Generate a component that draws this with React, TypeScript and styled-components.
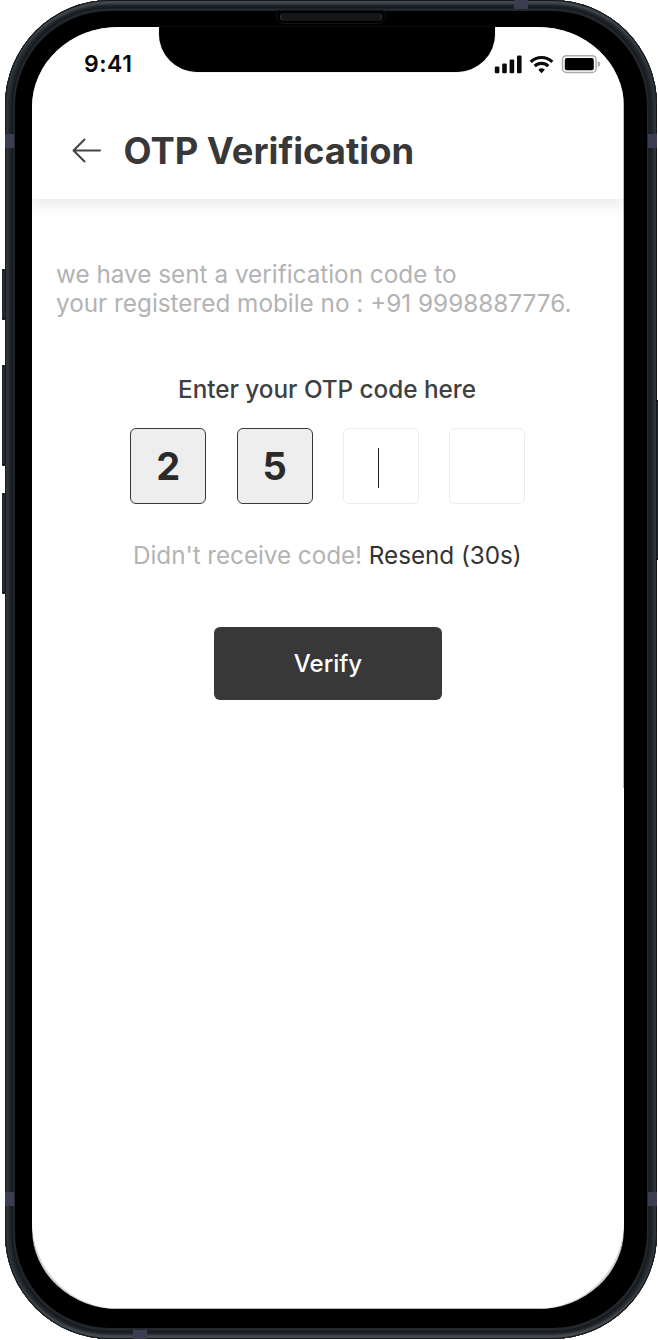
import React from "react";
import styled, { createGlobalStyle, css } from "styled-components";

const GlobalStyle = createGlobalStyle`
  *, *::before, *::after { box-sizing: border-box; }
  html, body { margin: 0; padding: 0; background: #fff; }
  body { font-family: Inter, "Liberation Sans", sans-serif; overflow: hidden; }
`;

const Stage = styled.div`
  position: relative;
  width: 658px;
  height: 1340px;
  padding: 0 1px 1.5px 5px;
  overflow: hidden;
`;

const Casing = styled.div`
  position: relative;
  width: 100%;
  height: 100%;
  padding: 11px 10px;
  border-radius: 105px;
  background: #22272d;
  box-shadow:
    inset 0 0 0 1px #14181c,
    inset 0 5px 2px -1px #424a4e,
    inset 0 -5px 2px -1px #454b4e,
    inset 0 0 2px 3px #30363d,
    inset 0 0 3px 6px #262c32,
    inset 0 0 1px 8.5px #15191d,
    inset 0 0 0 9.5px #2b2e31;
`;

const Bezel = styled.div`
  position: relative;
  height: 100%;
  padding: 10px 23px 12.5px 17px;
  border-radius: 95px;
  background: #000;
`;

const Screen = styled.div`
  height: 100%;
  overflow: hidden;
  border-radius: 86px;
  background: #d2d4dc;
  border-top: 6px solid #000;
  border-bottom: 6px solid #000;
`;

const View = styled.main`
  display: flex;
  flex-direction: column;
  height: 100%;
  background:
    linear-gradient(#bbb, #bbb) right top / 1px 761px no-repeat,
    linear-gradient(#b4b4b8, #b4b4b8) left bottom / 100% 1px no-repeat,
    #fff;
  border-radius: 0 0 88px 88px;
`;

const Notch = styled.div`
  position: absolute;
  z-index: 2;
  top: 16px;
  left: 144px;
  width: 336px;
  height: 45px;
  border-radius: 0 0 38px 38px;
  background: #000;
  box-shadow: 0 0 1px #777;
`;

const Speaker = styled.div`
  position: absolute;
  z-index: 3;
  top: -1px;
  left: 261px;
  width: 109.5px;
  height: 14px;
  padding: 2px 3px;
  border: 1px solid #111315;
  border-radius: 3px 3px 8px 8px;
  background: #000;
`;

const SpeakerMesh = styled.div`
  height: 8px;
  border-radius: 4px;
  background: #141617;
  border-left: 1px solid #333;
  border-right: 1px solid #333;
`;

const Antenna = styled.i<{ $x: number; $y: number; $horizontal?: boolean }>`
  position: absolute;
  left: ${(p) => p.$x}px;
  top: ${(p) => p.$y}px;
  width: ${(p) => (p.$horizontal ? 14 : 9)}px;
  height: ${(p) => (p.$horizontal ? 9 : 14)}px;
  background: #3c3d50;
`;

const SideKey = styled.i<{ $x: number; $y: number; $height: number }>`
  position: absolute;
  left: ${(p) => p.$x}px;
  top: ${(p) => p.$y}px;
  width: 3px;
  height: ${(p) => p.$height}px;
  background: #24292f;
  border-top: 2px solid #0b0d0f;
  border-bottom: 2px solid #0b0d0f;
  border-radius: 1px;
`;

const StatusBar = styled.div`
  display: flex;
  align-items: center;
  justify-content: space-between;
  height: 73px;
  padding: 0 22px 0 52px;
`;

const Clock = styled.span`
  font-size: 23px;
  line-height: 28px;
  font-weight: 600;
  letter-spacing: 0.5px;
  color: #0a0a0a;
`;

const StatusIcons = styled.svg`
  display: block;
  width: 108px;
  height: 22px;
`;

const Header = styled.header`
  display: flex;
  align-items: center;
  flex: none;
  height: 99px;
  padding: 2px 40px 0;
  gap: 21.5px;
  box-shadow: 0 6px 15px rgba(0, 0, 0, 0.09);
  clip-path: inset(0 0 -30px 0);
`;

const BackButton = styled.button`
  display: block;
  margin: 0;
  padding: 0;
  border: 0;
  background: none;
  svg { display: block; }
`;

const Title = styled.h1`
  margin: 0;
  font-size: 36.4px;
  line-height: 44px;
  font-weight: 700;
  color: #383838;
`;

const Content = styled.section`
  display: flex;
  flex-direction: column;
  align-items: center;
`;

const Note = styled.p`
  align-self: stretch;
  margin: 61px 0 0;
  padding-left: 24px;
  font-size: 24.3px;
  line-height: 29px;
  color: #b3b3b3;
  white-space: nowrap;
`;

const Prompt = styled.label`
  margin: 56px 0 0 -2px;
  font-size: 24.3px;
  line-height: 30px;
  font-weight: 500;
  letter-spacing: -0.03px;
  color: #404040;
`;

const CodeRow = styled.div`
  display: flex;
  gap: 30.3px;
  margin: 24px 0 0 -0.5px;
`;

const Digit = styled.div<{ $filled?: boolean }>`
  display: flex;
  align-items: center;
  justify-content: center;
  width: 76px;
  height: 76px;
  border: 1px solid #ececec;
  border-radius: 6px;
  font-size: 38px;
  font-weight: 700;
  color: #2a2a2a;
  ${(p) => p.$filled && css`
    border: 1.5px solid #383838;
    background: #eee;
  `}
`;

const Caret = styled.span`
  width: 1px;
  height: 40px;
  margin: 4px 5px 0 0;
  background: #222;
`;

const Resend = styled.p`
  margin: 36px 0 0 -1.5px;
  font-size: 24.3px;
  line-height: 30px;
  letter-spacing: -0.06px;
  color: #b3b3b3;
  white-space: pre;
  span { color: #333; }
`;

const VerifyButton = styled.button`
  width: 228px;
  height: 73px;
  margin-top: 57px;
  padding: 0;
  border: 0;
  border-radius: 6px;
  background: #383838;
  color: #fff;
  font: 500 24px/30px Inter, sans-serif;
`;

const digits = ["2", "5", null, ""];

export default function App() {
  return (
    <>
      <GlobalStyle />
      <Stage>
        <SideKey $x={2} $y={269} $height={51} />
        <SideKey $x={2} $y={365} $height={101} />
        <SideKey $x={2} $y={493} $height={101} />
        <SideKey $x={656} $y={400} $height={160} />
        <Casing>
          <Antenna $x={0} $y={134} />
          <Antenna $x={643} $y={134} />
          <Antenna $x={0} $y={1192} />
          <Antenna $x={643} $y={1192} />
          <Antenna $x={509} $y={0} $horizontal />
          <Antenna $x={128} $y={1329.5} $horizontal />
          <Bezel>
            <Notch />
            <Speaker><SpeakerMesh /></Speaker>
            <Screen>
              <View>
                <StatusBar>
                  <Clock>9:41</Clock>
                  <StatusIcons viewBox="0 0 108 22" aria-label="Status">
                    <g fill="#0a0a0a">
                      <rect x="0.8" y="13.5" width="4.6" height="6.8" rx="1.2" />
                      <rect x="8.2" y="10.5" width="4.6" height="9.8" rx="1.2" />
                      <rect x="15.6" y="6.5" width="4.6" height="13.8" rx="1.2" />
                      <rect x="23" y="2.5" width="4.6" height="17.8" rx="1.2" />
                    </g>
                    <g fill="none" stroke="#0a0a0a" strokeWidth="3.1">
                      <path d="M36.7 8.9a15.4 15.4 0 0 1 21.6 0" />
                      <path d="M40.7 13.2a9.6 9.6 0 0 1 13.6 0" />
                    </g>
                    <path d="M44.2 16.7a5 5 0 0 1 6.6 0L47.5 20.3z" fill="#0a0a0a" />
                    <rect x="68.5" y="2.7" width="33.6" height="16.8" rx="4" fill="none" stroke="#aaa" strokeWidth="1.5" />
                    <rect x="70.8" y="5" width="29" height="12.2" rx="2" fill="#000" />
                    <path d="M103.8 8.1c3 1 3 5 0 6z" fill="#aaa" />
                  </StatusIcons>
                </StatusBar>
                <Header>
                  <BackButton aria-label="Back">
                    <svg width="30" height="26" viewBox="0 0 30 26" fill="none" stroke="#444" strokeWidth="2" strokeLinecap="round" strokeLinejoin="round">
                      <path d="M28 12.5H1.5M12.5 1.5L1.5 12.5l11 11" />
                    </svg>
                  </BackButton>
                  <Title>OTP Verification</Title>
                </Header>
                <Content>
                  <Note>we have sent a verification code to<br />your registered mobile no : +91 9998887776.</Note>
                  <Prompt>Enter your OTP code here</Prompt>
                  <CodeRow>
                    {digits.map((d, i) => (
                      <Digit key={i} $filled={!!d}>{d === null ? <Caret /> : d}</Digit>
                    ))}
                  </CodeRow>
                  <Resend>Didn't receive code! <span>Resend (30s)</span></Resend>
                  <VerifyButton>Verify</VerifyButton>
                </Content>
              </View>
            </Screen>
          </Bezel>
        </Casing>
      </Stage>
    </>
  );
}
